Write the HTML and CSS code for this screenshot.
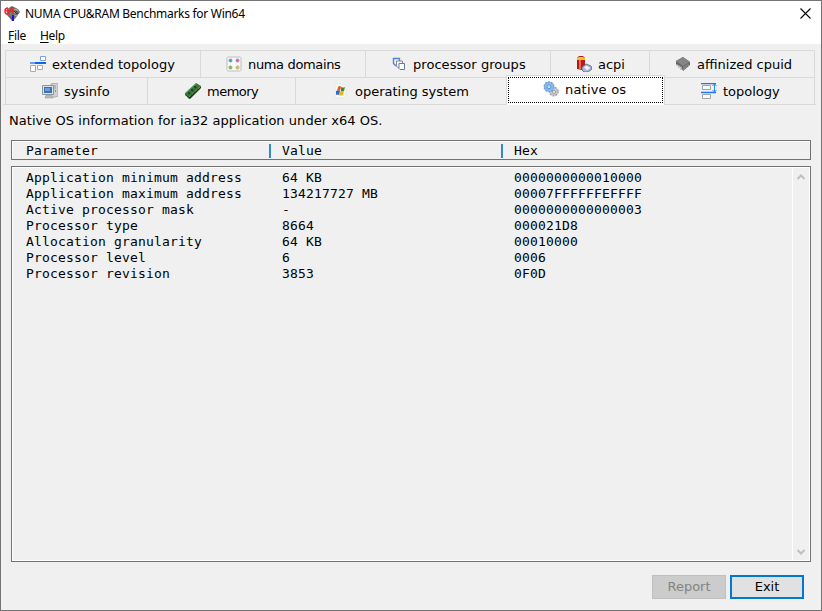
FILE: index.html
```html
<!DOCTYPE html>
<html lang="en">
<head>
<meta charset="utf-8">
<title>NUMA CPU&amp;RAM Benchmarks for Win64</title>
<link rel="stylesheet" href="styles.css">
</head>
<body>
<div class="window">
  <header class="titlebar">
    <svg class="logo" width="16" height="16" viewBox="0 0 16 16"><path d="M3 3l5-3 6 3 2 3-5 7-3 2-5-6z" fill="#777"/><path d="M9 3l4 1M9 6l5 1M10 9l3 1M12 3l2 2" stroke="#aaa"/><path d="M4 2Q1 2 1 5q0 3 2 3t2-2q0-2-3-1M8 1L6 5h4M9 1v7" fill="none" stroke="#ee2424" stroke-width="1.500"/><path d="M3 8l5 4 4-4-4 5z" fill="#a22"/><path d="M8 9h2v6H8z" fill="#1818dc"/><path d="M10 5l3 3M12 5l2 3" stroke="#333"/></svg>
    <span class="title">NUMA CPU&amp;RAM Benchmarks for Win64</span>
    <svg class="close" width="11" height="11" viewBox="0 0 11 11"><path d="M.5.5l10 10M10.5.5l-10 10" stroke="#000" stroke-width="1.1"/></svg>
  </header>
  <nav class="menu"><span class="file"><u>F</u>ile</span><span><u>H</u>elp</span></nav>
  <div class="tabs">
    <div class="tabrow upper">
      <div class="tab t1"><svg width="16" height="16" viewBox="0 0 16 16"><path d="M0 6h16v2H0z" fill="#0868ee"/><path d="M0 6h5v2H0z" fill="#62a0f4"/><path d="M10.5.5h5v4h-5z" fill="#fff" stroke="#7da2dc"/><path d="M.5 9.500h5v6h-5zM7.500 9.500h5v4h-5z" fill="#fff" stroke="#aaa"/></svg><span>extended topology</span></div>
      <div class="tab t2"><svg width="16" height="16" viewBox="0 0 16 16"><rect x="1" y="1" width="14" height="14" rx="1.500" fill="#fafafa" stroke="#bebebe"/><g stroke="#999" stroke-width=".5"><circle cx="4.500" cy="4.500" r="1.700" fill="#42a5d5"/><circle cx="11.500" cy="4.500" r="1.700" fill="#d366d2"/><circle cx="4.500" cy="11.500" r="1.700" fill="#78c83c"/><circle cx="11.500" cy="11.500" r="1.700" fill="#d3cc4a"/></g></svg><span>numa domains</span></div>
      <div class="tab t3"><svg width="16" height="16" viewBox="0 0 16 16"><path d="M2.500 2.500h6v7h-4l-2-2z" fill="#edf3fd" stroke="#4d83dc" stroke-width="1.400"/><path d="M5.500 5h6v7h-4l-2-2z" fill="#f5f5f5" stroke="#888"/><path d="M8 7.500h5.500v6H9l-1-1z" fill="#fff" stroke="#647b9a"/></svg><span>processor groups</span></div>
      <div class="tab t4"><svg width="16" height="16" viewBox="0 0 16 16"><path d="M1 2l2-2h4l2 2v11l-3 1-5-1z" fill="#b71d16"/><path d="M1 2h1v11H1z" fill="#444"/><path d="M3 3h2v10H3z" fill="#f06a4d"/><path d="M1 2l2-1h4l2 1v2H1z" fill="#eec52c"/><path d="M6 11l4-3 5 2 1 3-4 3H8l-2-2z" fill="#abb8da" stroke="#435071" stroke-width=".7"/><path d="M8 11l3-1 3 2-3 2z" fill="#f4f7ff"/></svg><span>acpi</span></div>
      <div class="tab t5"><svg width="16" height="16" viewBox="0 0 16 16"><path d="M1 5l7-4 7 5v3l-7 6-2-4-5-3z" fill="#666"/><path d="M1 5l7-4 7 5-7 4z" fill="#858585"/><path d="M2 8v2M4 9v3M6 10v4M9 10v4M11 9v3M13 8v2" stroke="#999"/></svg><span>affinized cpuid</span></div>
    </div>
    <div class="tabrow lower">
      <div class="tab b1"><svg width="16" height="16" viewBox="0 0 16 16"><path d="M9 1l5-1 2 1v12l-3 1H9z" fill="#d0d3d5" stroke="#a6acaf"/><path d="M10 3h4M10 5h4" stroke="#999"/><path d="M13 7h1v2h-1z" fill="#46bb45"/><path d="M.5 2.500h11v9H.5z" fill="#dce1e4" stroke="#8e979c"/><path d="M2 4h8v6H2z" fill="#3b70ba"/><path d="M3 5h5v3H3z" fill="#719dd4"/><path d="M4 12h5l2 3H3z" fill="#b5babc" stroke="#8c9498" stroke-width=".5"/></svg><span>sysinfo</span></div>
      <div class="tab b2"><svg width="16" height="16" viewBox="0 0 16 16"><path d="M0 10L11 0l5 3L6 14l-2 2-4-5z" fill="#38783c"/><path d="M0 11l4 3L16 3v2L5 16l-5-4z" fill="#173c1c"/><path d="M3 9l2 2M6 6l2 2M9 3l2 2" stroke="#1d4526" stroke-width="2"/><path d="M1 10l10-9" stroke="#67a26a"/><path d="M4 14L15 4" stroke="#b09a3c" stroke-dasharray="1 1"/></svg><span>memory</span></div>
      <div class="tab b3"><svg width="16" height="16" viewBox="0 0 16 16"><path d="M2 1h8l3 3v11H2z" fill="#f8f8f6" stroke="#e8e8e5"/><path d="M5 4q2-2 3 0l-1 4q-1-1-3 0z" fill="#e95a18"/><path d="M8 4q2 1 4 0l-1 4q-2 1-3 0z" fill="#418b20"/><path d="M3 8q2-1 4 0l-1 4q-2-1-3 0z" fill="#3367ca"/><path d="M7 8q2 1 4 0l-1 4q-2 1-4 0z" fill="#edb51b"/></svg><span>operating system</span></div>
      <div class="tab b4"><svg width="16" height="16" viewBox="0 0 16 16"><circle cx="10.800" cy="10.500" r="4.200" fill="#c7c9cb"/><circle cx="10.800" cy="10.500" r="4.300" fill="none" stroke="#a2a6a8" stroke-width="1.400" stroke-dasharray="2 1"/><circle cx="11" cy="11" r="1.500" fill="#fff" stroke="#999"/><circle cx="6" cy="5.800" r="5" fill="#8cbced"/><circle cx="6" cy="5.800" r="4.800" fill="none" stroke="#6ba0dc" stroke-width="1.400" stroke-dasharray="2 1"/><circle cx="6" cy="5.800" r="2" fill="#bedcf7" stroke="#5d94cb"/></svg><span>native os</span></div>
      <div class="tab b5"><svg width="16" height="16" viewBox="0 0 16 16"><path d="M0 .5h15M0 9.500h15" stroke="#1c78f0" stroke-width="1.400"/><path d="M13.500 1v8M11.500 3l2-2 2 2M11.500 7l2 2 2-2" fill="none" stroke="#3485eb"/><path d="M1.500 2.500h8v4h-8zM1.500 11.500h8v4h-8z" fill="#fafafa" stroke="#a5a5a5"/></svg><span>topology</span></div>
    </div>
  </div>
  <p class="caption">Native OS information for ia32 application under x64 OS.</p>
  <div class="columns head"><span>Parameter</span><span class="value">Value</span><span class="hex">Hex</span></div>
  <main class="list">
    <div class="rows">
      <div class="columns"><span>Application minimum address</span><span>64 KB</span><span>0000000000010000</span></div>
      <div class="columns"><span>Application maximum address</span><span>134217727 MB</span><span>00007FFFFFFEFFFF</span></div>
      <div class="columns"><span>Active processor mask</span><span>-</span><span>0000000000000003</span></div>
      <div class="columns"><span>Processor type</span><span>8664</span><span>000021D8</span></div>
      <div class="columns"><span>Allocation granularity</span><span>64 KB</span><span>00010000</span></div>
      <div class="columns"><span>Processor level</span><span>6</span><span>0006</span></div>
      <div class="columns"><span>Processor revision</span><span>3853</span><span>0F0D</span></div>
    </div>
    <div class="scroll">
      <svg width="8" height="6" viewBox="0 0 8 6"><path d="M.5 5L4 1.500 7.500 5" fill="none" stroke="#bfbfbf" stroke-width="2"/></svg>
      <svg width="8" height="6" viewBox="0 0 8 6"><path d="M.5 1L4 4.500 7.500 1" fill="none" stroke="#bfbfbf" stroke-width="2"/></svg>
    </div>
  </main>
  <footer class="actions"><button class="report" disabled>Report</button><button class="exit">Exit</button></footer>
</div>
</body>
</html>
```
FILE: styles.css
```css
* { box-sizing: border-box; }
body { margin: 0; overflow: hidden; }
svg { display: block; flex: none; }
.window {
  width: 822px;
  height: 611px;
  border: 1px solid #737373;
  background: #f0f0f0;
  color: #000;
  font: 13px/16px "DejaVu Sans", Verdana, sans-serif;
  display: flex;
  flex-direction: column;
}
.titlebar {
  height: 25px;
  flex: none;
  background: #fff;
  display: flex;
  align-items: center;
  padding: 0 10px 0 3px;
  font: 12px/16px "Noto Sans", sans-serif;
}
.title { margin-left: 5px; letter-spacing: -0.29px; white-space: nowrap; }
.close { margin-left: auto; }
.menu {
  height: 18px;
  flex: none;
  background: #fff;
  padding: 2px 7px 0;
  display: flex;
  gap: 14px;
  font: 12px/16px "Noto Sans", sans-serif;
  letter-spacing: -0.3px;
}
.menu u { text-underline-offset: 2px; }
.tabs { flex: none; padding: 6px 5px 0 2px; height: 61px; }
.tabrow { display: flex; }
.upper { margin: 0 1px 0 2px; height: 27px; border-left: 1px solid #d9d9d9; }
.lower { height: 28px; border-bottom: 1px solid #d9d9d9; padding: 0 1px 0 2px; }
.tab {
  display: flex;
  align-items: center;
  gap: 6px;
  white-space: nowrap;
  border-top: 1px solid #d9d9d9;
  border-right: 1px solid #d9d9d9;
}
.tab span { padding-top: 1px; }
.t1 { width: 195px; padding-left: 24px; letter-spacing: 0.05px; }
.t2 { width: 165px; padding-left: 25px; letter-spacing: -0.35px; }
.t3 { width: 185px; padding-left: 25px; letter-spacing: 0.05px; }
.t4 { width: 99px; padding-left: 25px; }
.t5 { flex: 1; padding-left: 25px; }
.b1 { width: 143px; padding-left: 36px; border-left: 1px solid #d9d9d9; }
.b2 { width: 148px; padding-left: 37px; letter-spacing: -0.5px; }
.b3 { width: 210px; padding-left: 37px; border-right: 0; }
.b4 {
  width: 159px;
  height: 30px;
  margin: -2px 0 -1px;
  background: #fff;
  border: 1px solid #d9d9d9;
  border-bottom: 0;
  padding: 0 0 3px 36px;
  outline: 1px dotted #000;
  outline-offset: -3px;
  letter-spacing: 0.2px;
}
.b5 { flex: 1; padding-left: 36px; }
.caption { flex: none; margin: 8px 0 0 8px; height: 27px; letter-spacing: 0.04px; }
.columns {
  display: grid;
  grid-template-columns: 256px 232px 1fr;
  height: 16px;
  font: 13px/16px "DejaVu Sans Mono", monospace;
  letter-spacing: 0.174px;
  white-space: pre;
}
.head {
  flex: none;
  height: 20px;
  width: 800px;
  margin-left: 10px;
  padding: 2px 0 0 14px;
  border: 1px solid #737373;
  box-shadow: inset 1px 1px #fff;
}
.value, .hex { height: 14px; line-height: 14px; margin: 1px 0 0 -13px; padding-left: 11px; border-left: 2px solid #318ac7; }
.list {
  flex: none;
  width: 800px;
  height: 396px;
  margin: 6px 0 0 10px;
  border: 1px solid #737373;
  display: flex;
  box-shadow: inset 0 0 0 1px #fff;
}
.rows { flex: 1; padding: 3px 0 0 14px; }
.scroll {
  width: 18px;
  border-left: 1px solid #fff;
  display: flex;
  flex-direction: column;
  align-items: center;
  justify-content: space-between;
  padding: 7px 2px 6px 0;
}
.actions { display: flex; gap: 4px; justify-content: flex-end; padding: 13px 17px 0 0; }
button { width: 74px; height: 24px; padding: 0; font: 13px/18px "DejaVu Sans", Verdana, sans-serif; border-radius: 0; }
.report { background: #ccc; border: 1px solid #bfbfbf; color: #838383; }
.exit { background: #e1e1e1; border: 2px solid #0078d7; color: #000; }
```
